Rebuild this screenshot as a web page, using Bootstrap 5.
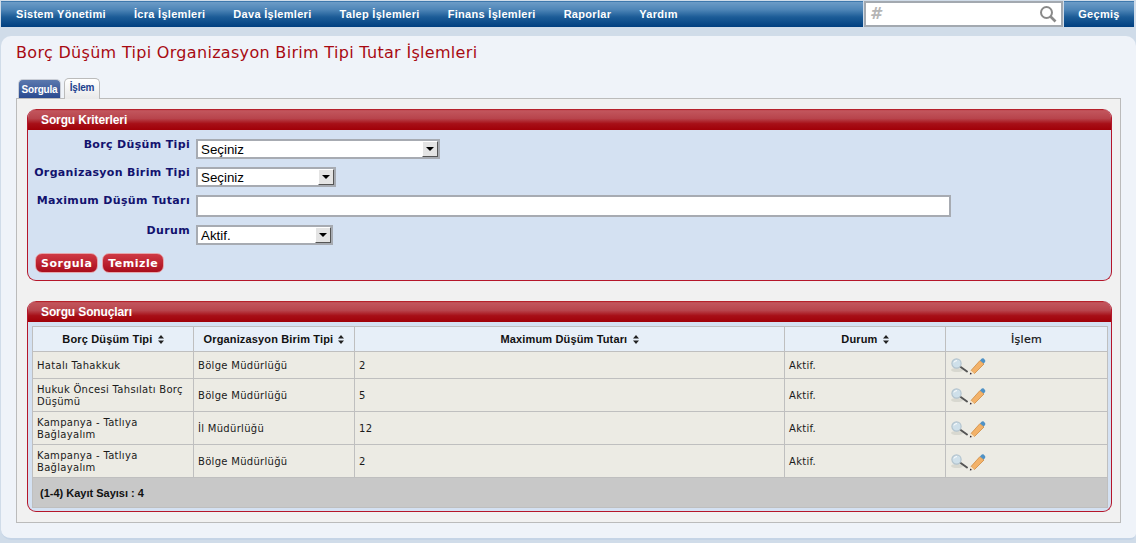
<!DOCTYPE html>
<html lang="tr">
<head>
<meta charset="utf-8">
<title>Borç Düşüm Tipi</title>
<link href="https://cdn.jsdelivr.net/npm/bootstrap@5.3.0/dist/css/bootstrap.min.css" rel="stylesheet">
<style>
html,body{height:543px;overflow:hidden}
body{background:#d0dce9;font-family:"DejaVu Sans",sans-serif;font-size:10px;color:#111;padding-top:1px}
.topbar{height:26px;gap:1px;padding:0 2px 0 1px}
.menubar{flex:1;height:26px;background:linear-gradient(#6d9cc7 0,#4f86b8 30%,#1c5c97 60%,#003f80 100%);border-top:1px solid #3e78ad;padding-left:15px;gap:28px;margin-right:0}
.menubar a,.histbtn{font:bold 11px "Liberation Sans",sans-serif;color:#fff;text-decoration:none;line-height:25px;letter-spacing:.3px}
.searchwrap{width:199px;height:26px;background:#fff;border:2px solid #a3a9b0;padding:0 4px 0 4px}
.searchwrap input{border:0;outline:0;flex:1;min-width:0;background:transparent;height:20px}
.hashmark{font:italic bold 16px "DejaVu Sans",sans-serif;color:#b5b5b5;line-height:20px}
.histbtn{width:70px;text-align:center;background:linear-gradient(#6d9cc7 0,#4f86b8 30%,#1c5c97 60%,#003f80 100%);border-top:1px solid #3e78ad;height:26px}
.mainpanel{margin:9px 0 0 1px;height:504px;background:#eff3f9;border-radius:10px 10px 6px 10px;border-bottom:2px solid #c5d4e6;padding:0 15px}
.pagetitle{font:16px/19px "DejaVu Sans",sans-serif;color:#a80a12;margin:0;padding:7px 0 0;height:42px;letter-spacing:.31px}
.tabstrip{height:20px;padding-left:2px;gap:3px}
.tabitem{font:bold 10px "Liberation Sans",sans-serif;display:block;text-decoration:none;text-align:center;border-radius:5px 5px 0 0;letter-spacing:-.2px}
.tabon{width:43px;height:19px;margin-top:1px;background:linear-gradient(#5a78ae,#2a4a90);color:#fff;line-height:19px;border:1px solid #c9cdd6;border-bottom:0}
.taboff{width:36px;height:21px;background:linear-gradient(#fff,#e9e9e9);color:#1d3f8e;line-height:18px;border:1px solid #bbb;border-bottom:0}
.contentbox{background:#f1f1f1;border:1px solid #bbb;width:1105px;height:425px;padding:10px 8px 0 10px}
.redpanel{background:#d4e1f2;border:1px solid #b5162a;border-top:0;border-radius:9px 9px 9px 9px;overflow:hidden}
.redhead{height:21px;background:linear-gradient(#b00a14 0,#c2565d 8%,#b8444c 45%,#a70f17 70%,#a00008 100%);color:#fff;font:bold 12px/22px "Liberation Sans",sans-serif;padding-left:14px;margin:0 -1px;border-radius:9px 9px 0 0;letter-spacing:-.12px}
.firstpanel{height:172px;margin-bottom:20px}
.formrow{display:flex;align-items:flex-start;height:28px}
.formrow.tallrow{height:30px}
.fieldlabel{width:162px;text-align:right;font:bold 11px/13px "DejaVu Sans",sans-serif;color:#12126e;padding-top:0;margin:-1px 6px 0 0;letter-spacing:.34px;white-space:nowrap}
.selbox{display:flex;height:20px;background:#fff;border:2px solid #a7abb2}
.selbox select{flex:1;min-width:0;appearance:none;border:0;outline:0;background:transparent;font:13.33px "Liberation Sans",sans-serif;color:#000;padding:0 0 0 3px}
.selarrow{width:16px;background:#e4e4e4;border:1px solid #555;border-top-color:#fff;border-left-color:#fff;display:flex;align-items:center;justify-content:center}
.selarrow::after{content:"";border:4px solid transparent;border-top:4px solid #000;border-bottom:0}
.wide-a{width:244px}.wide-b{width:140px}.wide-c{width:137px}
.fieldinput{width:755px;height:22px;border:2px solid #a7abb2;background:#fff;outline:0}
.formbody{padding:9px 0 0 0}
.btnrow{padding:0 0 0 7px;gap:4px}
.redbtn{height:20px;border:1px solid #e4a7ad;border-radius:7px;background:linear-gradient(#cf3a45,#a90d1c);color:#fff;font:bold 11px/18px "DejaVu Sans",sans-serif;padding:1px 5px 0;letter-spacing:.5px}
.secondpanel{height:211px}
.tablewrap{padding:4px 3px 0 4px}
.gridtable{width:1075px;table-layout:fixed;border-collapse:collapse;border:1px solid #bfc3c8}
.gridtable th,.gridtable td{border:1px solid #bfbfbf;vertical-align:middle}
.gridtable th{height:25px;background:#e7eff8;text-align:center;font:bold 11px "Liberation Sans",sans-serif;color:#111;padding:0 4px;letter-spacing:.15px}
.gridtable th.plainhead{font:bold 11px "DejaVu Sans",sans-serif;font-weight:400;-webkit-text-stroke:.2px #111;letter-spacing:.3px}
.gridtable td{background:#ecebe4;font:10px/12px "DejaVu Sans",sans-serif;color:#1a1a1a;padding:2px 4px 0;letter-spacing:.3px}
.sorticon{display:inline-block;width:6px;height:9px;margin-left:2px;vertical-align:-1px}
.gridtable td.pagerow{height:30px;background:#c8c8c8;font:bold 11px "Liberation Sans",sans-serif;color:#111;padding:0 0 0 7px;letter-spacing:0}
.rowone{height:27px}.rowtwo{height:33px}
</style>
</head>
<body>
<div class="d-flex topbar">
  <nav class="d-flex menubar">
    <a href="#">Sistem Yönetimi</a><a href="#">İcra İşlemleri</a><a href="#">Dava İşlemleri</a><a href="#">Talep İşlemleri</a><a href="#">Finans İşlemleri</a><a href="#">Raporlar</a><a href="#">Yardım</a>
  </nav>
  <div class="d-flex align-items-center searchwrap">
    <span class="hashmark">#</span>
    <input type="text" aria-label="Ara">
    <svg width="18" height="18" viewBox="0 0 18 18" fill="none" stroke="#8a8a8a"><circle cx="7.5" cy="7.5" r="5.5" stroke-width="2"/><path d="M11.5 11.5 16.5 16.5" stroke-width="2.6"/></svg>
  </div>
  <a href="#" class="histbtn">Geçmiş</a>
</div>
<main class="mainpanel">
  <h1 class="pagetitle">Borç Düşüm Tipi Organizasyon Birim Tipi Tutar İşlemleri</h1>
  <div class="d-flex tabstrip">
    <a href="#" class="tabitem tabon">Sorgula</a>
    <a href="#" class="tabitem taboff">İşlem</a>
  </div>
  <div class="contentbox">
    <section class="redpanel firstpanel">
      <div class="redhead">Sorgu Kriterleri</div>
      <form class="formbody">
        <div class="formrow"><label class="fieldlabel">Borç Düşüm Tipi</label><div class="selbox wide-a"><select aria-label="Borç Düşüm Tipi"><option>Seçiniz</option></select><span class="selarrow"></span></div></div>
        <div class="formrow"><label class="fieldlabel">Organizasyon Birim Tipi</label><div class="selbox wide-b"><select aria-label="Organizasyon Birim Tipi"><option>Seçiniz</option></select><span class="selarrow"></span></div></div>
        <div class="formrow tallrow"><label class="fieldlabel">Maximum Düşüm Tutarı</label><input class="fieldinput" type="text" aria-label="Maximum Düşüm Tutarı"></div>
        <div class="formrow"><label class="fieldlabel">Durum</label><div class="selbox wide-c"><select aria-label="Durum"><option>Aktif.</option></select><span class="selarrow"></span></div></div>
        <div class="d-flex btnrow"><button type="button" class="redbtn">Sorgula</button><button type="button" class="redbtn">Temizle</button></div>
      </form>
    </section>
    <section class="redpanel secondpanel">
      <div class="redhead">Sorgu Sonuçları</div>
      <div class="tablewrap">
        <table class="gridtable">
          <colgroup><col style="width:161px"><col style="width:161px"><col style="width:430px"><col style="width:161px"><col style="width:162px"></colgroup>
          <thead><tr>
            <th>Borç Düşüm Tipi <svg class="sorticon" viewBox="0 0 6 9"><path d="M3 0 6 3.5H0ZM0 5.5H6L3 9Z" fill="#222"/></svg></th>
            <th>Organizasyon Birim Tipi <svg class="sorticon" viewBox="0 0 6 9"><path d="M3 0 6 3.5H0ZM0 5.5H6L3 9Z" fill="#222"/></svg></th>
            <th>Maximum Düşüm Tutarı <svg class="sorticon" viewBox="0 0 6 9"><path d="M3 0 6 3.5H0ZM0 5.5H6L3 9Z" fill="#222"/></svg></th>
            <th>Durum <svg class="sorticon" viewBox="0 0 6 9"><path d="M3 0 6 3.5H0ZM0 5.5H6L3 9Z" fill="#222"/></svg></th>
            <th class="plainhead">İşlem</th>
          </tr></thead>
          <tbody>
            <tr class="rowone"><td>Hatalı Tahakkuk</td><td>Bölge Müdürlüğü</td><td>2</td><td>Aktif.</td><td><svg width="36" height="18" viewBox="0 0 36 18"><use href="#actionicons"/></svg></td></tr>
            <tr class="rowtwo"><td>Hukuk Öncesi Tahsılatı Borç Düşümü</td><td>Bölge Müdürlüğü</td><td>5</td><td>Aktif.</td><td><svg width="36" height="18" viewBox="0 0 36 18"><use href="#actionicons"/></svg></td></tr>
            <tr class="rowtwo"><td>Kampanya - Tatlıya Bağlayalım</td><td>İl Müdürlüğü</td><td>12</td><td>Aktif.</td><td><svg width="36" height="18" viewBox="0 0 36 18"><use href="#actionicons"/></svg></td></tr>
            <tr class="rowtwo"><td>Kampanya - Tatlıya Bağlayalım</td><td>Bölge Müdürlüğü</td><td>2</td><td>Aktif.</td><td><svg width="36" height="18" viewBox="0 0 36 18"><use href="#actionicons"/></svg></td></tr>
          </tbody>
          <tfoot><tr><td class="pagerow" colspan="5">(1-4) Kayıt Sayısı : 4</td></tr></tfoot>
        </table>
      </div>
    </section>
  </div>
</main>
<svg width="0" height="0" class="d-block" aria-hidden="true">
  <defs>
    <g id="actionicons">
      <ellipse cx="7" cy="13" rx="6" ry="2" fill="#d8d8d0"/>
      <path d="M10 9.5 17 14.5" stroke="#555" stroke-width="2" stroke-linecap="round"/>
      <circle cx="6.5" cy="6.5" r="4.6" fill="#cfe0ea" stroke="#b3c4cf" stroke-width="1.2"/>
      <path d="M4 5.5A3 3 0 0 1 7 3.6" stroke="#fff" fill="none"/>
      <path d="M21 13.5 30 3.5 34 7 24.5 16.5Z" fill="#f3b269" stroke="#c98235" stroke-width=".7"/>
      <path d="M30 3.5 31.5 1.7C32.2 1 33 1 33.7 1.6L35 2.9C35.5 3.5 35.5 4.2 35 4.9L33.8 6.6Z" fill="#4f92c6"/>
      <path d="M21 13.5 19.8 17.5 24.5 16.5Z" fill="#f6e3c5"/>
      <path d="M19.8 17.5 20.3 15.6 22 17Z" fill="#1b1b3a"/>
    </g>
  </defs>
</svg>
</body>
</html>
